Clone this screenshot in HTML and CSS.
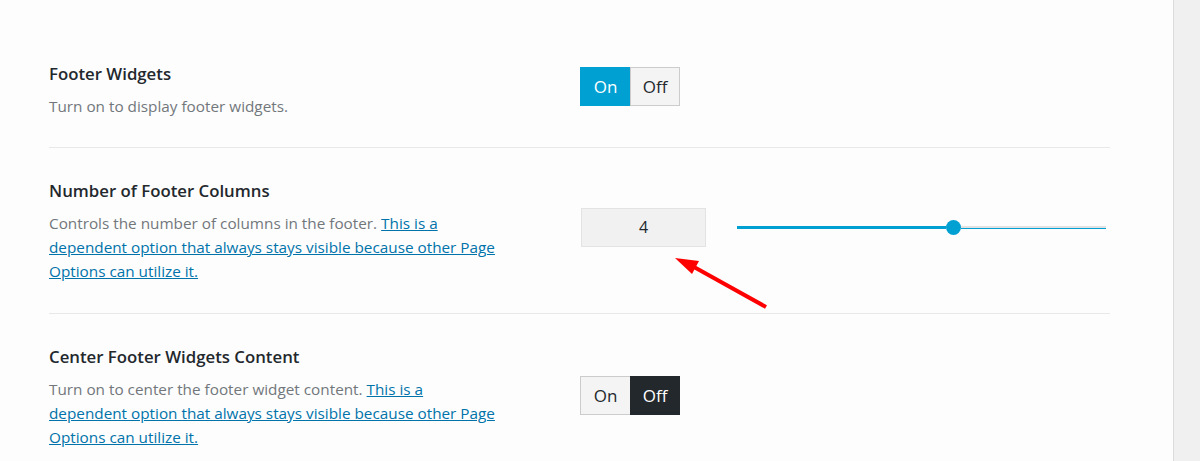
FILE: index.html
```html
<!DOCTYPE html>
<html lang="en">
<head>
    <meta charset="UTF-8">
    <meta name="viewport" content="width=device-width, initial-scale=1.0">
    <title>Footer options</title>
    <link rel="stylesheet" href="styles.css">
</head>
<body>
    <div class="page">
        <main class="options">
            <section class="option">
                <div class="option-text">
                    <h3 class="option-title">Footer Widgets</h3>
                    <p class="option-desc">Turn on to display footer widgets.</p>
                </div>
                <div class="option-control control-toggle">
                    <div class="toggle">
                        <span class="toggle-btn is-on">On</span>
                        <span class="toggle-btn">Off</span>
                    </div>
                </div>
            </section>

            <section class="option">
                <div class="option-text">
                    <h3 class="option-title">Number of Footer Columns</h3>
                    <p class="option-desc">Controls the number of columns in the footer. <a href="#">This is a dependent option that always stays visible because other Page Options can utilize it.</a></p>
                </div>
                <div class="option-control control-range">
                    <div class="range-value">4</div>
                    <div class="range">
                        <div class="range-fill"></div>
                        <div class="range-handle"></div>
                        <div class="range-rest"></div>
                    </div>
                    <!-- red arrow pointing at the value box -->
                    <svg class="pointer" width="110" height="70" viewBox="0 0 110 70">
                        <line x1="100" y1="63" x2="28" y2="23" stroke="#ff0000" stroke-width="4" stroke-linecap="butt"/>
                        <polygon points="9,14 33,17 26,30" fill="#ff0000"/>
                    </svg>
                </div>
            </section>

            <section class="option">
                <div class="option-text">
                    <h3 class="option-title">Center Footer Widgets Content</h3>
                    <p class="option-desc">Turn on to center the footer widget content. <a href="#">This is a dependent option that always stays visible because other Page Options can utilize it.</a></p>
                </div>
                <div class="option-control control-toggle">
                    <div class="toggle">
                        <span class="toggle-btn">On</span>
                        <span class="toggle-btn is-off">Off</span>
                    </div>
                </div>
            </section>
        </main>
        <div class="scrollbar"></div>
    </div>
</body>
</html>
```

FILE: styles.css
```css
:root{
    --cor-title: #23282d;
    --cor-desc: #72777c;
    --cor-link: #0073aa;
    --cor-blue: #00a0d2;
    --cor-line: #e8e8e8;

    --font-f: 'Open Sans', 'Noto Sans', sans-serif;
}

*{
    margin: 0px;
    padding: 0px;
    box-sizing: border-box;
}

body{
    background-color: #fdfdfd;
    font-family: var(--font-f);
    height: 461px;
    overflow: hidden;
}

.page{
    display: flex;
    height: 461px;
}

.options{
    flex: 1;
    padding: 31px 63px 0px 49px;
}

.option{
    display: grid;
    grid-template-columns: 531px 1fr;
    align-items: center;
    padding: 31px 0px 30px;
    border-bottom: 1px solid var(--cor-line);
}

.option:first-child{
    padding-bottom: 29px;
}

.option:last-child{
    border-bottom: none;
}

.option-title{
    font-size: 16.8px;
    font-weight: 600;
    line-height: 24px;
    color: var(--cor-title);
}

.option-desc{
    margin-top: 8px;
    max-width: 455px;
    font-size: 15.3px;
    line-height: 24px;
    color: var(--cor-desc);
}

.option-desc a{
    color: var(--cor-link);
}

.option-control{
    position: relative;
    display: flex;
    align-items: center;
}

.toggle{
    display: flex;
    height: 39px;
}

.toggle-btn{
    width: 50px;
    display: flex;
    align-items: center;
    justify-content: center;
    font-size: 17px;
    color: var(--cor-title);
    background-color: #f4f4f4;
    border: 1px solid #cccccc;
}

.toggle-btn:first-child{
    border-right: none;
}

.toggle-btn.is-on{
    background-color: var(--cor-blue);
    border-color: var(--cor-blue);
    color: white;
}

.toggle-btn.is-off{
    background-color: var(--cor-title);
    border-color: var(--cor-title);
    color: white;
}

.control-toggle{
    margin-top: -4px;
}

.option:first-child .control-toggle{
    margin-top: -8px;
}

.control-range{
    margin-top: -8px;
    padding-left: 1px;
}

.range-value{
    width: 125px;
    height: 39px;
    display: flex;
    align-items: center;
    justify-content: center;
    font-size: 16px;
    color: var(--cor-title);
    background-color: #f2f1f1;
    border: 1px solid #e3e3e3;
}

.range{
    width: 369px;
    margin-left: 31px;
    display: flex;
    align-items: center;
    height: 16px;
}

.range-fill{
    width: 209px;
    height: 3px;
    background-color: var(--cor-blue);
}

.range-handle{
    width: 15px;
    height: 15px;
    border-radius: 50%;
    background-color: var(--cor-blue);
}

.range-rest{
    flex: 1;
    height: 3px;
    background-color: #e2e2e2;
    border-bottom: 1px solid var(--cor-blue);
}

.pointer{
    position: absolute;
    left: 86px;
    top: 36px;
}

.scrollbar{
    width: 27px;
    background-color: #f0f0f0;
    border-left: 1px solid #dcdcdc;
}
```
